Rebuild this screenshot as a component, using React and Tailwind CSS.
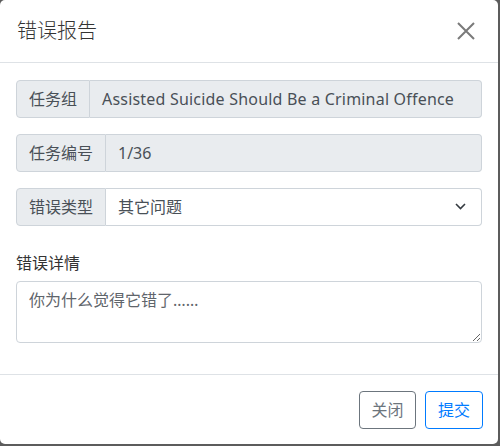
import { useState } from "react";

const font = { fontFamily: '"Segoe UI", "Noto Sans", "Noto Sans CJK SC", sans-serif' };

const Addon = ({ children }) => (
  <div className="flex items-center px-3 bg-[#e9ecef] border border-[#ced4da] rounded-l-[4px] text-[#495057] whitespace-nowrap">
    {children}
  </div>
);

const App = () => {
  const [type, setType] = useState("其它问题");

  return (
    <div className="w-[500px] h-[446px] bg-[#5c5c5c] overflow-hidden" style={font}>
      <div className="w-[498px] h-[444px] bg-white rounded-[5px] flex flex-col text-[#212529] text-[16px]">
        {/* header */}
        <div className="flex items-center justify-between px-4 h-[63px] border-b border-[#dee2e6]">
          <h5 className="text-[20px] leading-[30px] pl-px font-light text-[#333]">错误报告</h5>
          <button className="w-[20px] h-[20px] mr-[6px] text-[#7a7a7a]">
            <svg viewBox="0 0 20 20" width="20" height="20" stroke="currentColor" strokeWidth="2" fill="none">
              <path d="M2 2L18 18M18 2L2 18" />
            </svg>
          </button>
        </div>

        {/* body */}
        <div className="px-4 pt-[17px] flex-1">
          <div className="flex h-[38px] mb-[16px]">
            <Addon>任务组</Addon>
            <div className="flex-1 flex items-center px-3 bg-[#e9ecef] border border-l-0 border-[#ced4da] rounded-r-[4px] text-[#495057] whitespace-nowrap overflow-hidden tracking-[0.2px]">
              Assisted Suicide Should Be a Criminal Offence
            </div>
          </div>
          <div className="flex h-[38px] mb-[16px]">
            <Addon>任务编号</Addon>
            <div className="flex-1 flex items-center px-3 bg-[#e9ecef] border border-l-0 border-[#ced4da] rounded-r-[4px] text-[#495057]">
              1/36
            </div>
          </div>
          <div className="flex h-[38px]">
            <Addon>错误类型</Addon>
            <div className="flex-1 relative">
              <select
                value={type}
                onChange={(e) => setType(e.target.value)}
                className="appearance-none w-full h-full pl-3 pr-8 bg-white border border-l-0 border-[#ced4da] rounded-r-[4px] text-[#495057] outline-none"
                style={font}
              >
                <option>其它问题</option>
                <option>翻译错误</option>
              </select>
              <svg className="absolute right-[16px] top-[15px] pointer-events-none" width="11" height="7" viewBox="0 0 11 7" fill="none" stroke="#343a40" strokeWidth="1.6">
                <path d="M1 1l4.5 4.5L10 1" />
              </svg>
            </div>
          </div>

          <label className="block mt-[25px] mb-[6px] leading-[24px] text-[#333]">错误详情</label>
          <textarea
            rows={2}
            placeholder="你为什么觉得它错了……"
            className="block w-full h-[62px] px-3 py-[6px] border border-[#ced4da] rounded-[4px] placeholder-[#5f656b] text-[#495057] leading-[24px] outline-none"
            style={font}
          />
        </div>

        {/* footer */}
        <div className="flex items-center justify-end gap-[9px] px-[15px] h-[70px] border-t border-[#dee2e6]">
          <button className="h-[38px] w-[57px] border border-[#6c757d] text-[#6c757d] rounded-[4px]">关闭</button>
          <button className="h-[38px] w-[58px] border border-[#007bff] text-[#007bff] rounded-[4px]">提交</button>
        </div>
      </div>
    </div>
  );
};

export default App;
